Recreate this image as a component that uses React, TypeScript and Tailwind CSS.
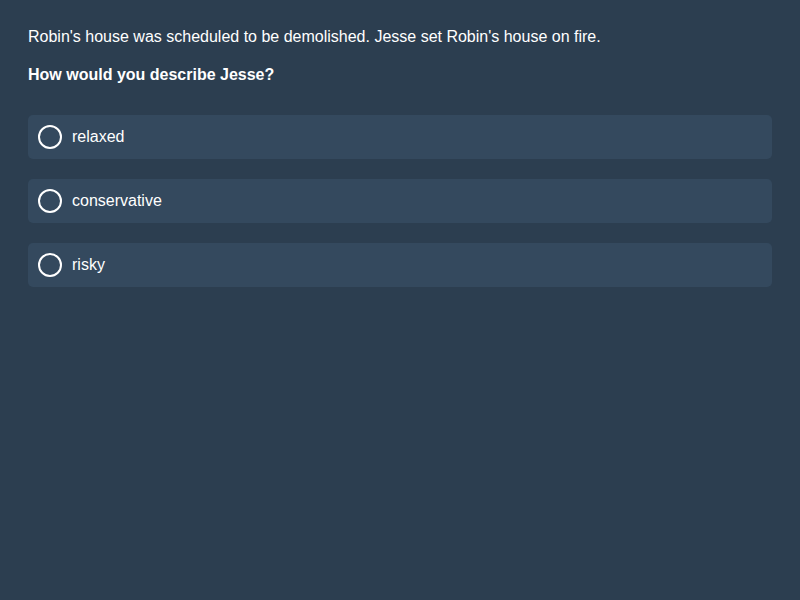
const options = ['relaxed', 'conservative', 'risky'];

export default function App() {
  return (
    <div className="min-h-screen w-full bg-[#2c3e50] p-7 text-white font-['Liberation_Sans',Arial,sans-serif] text-base leading-[18px]">
      <p className="mb-5">Robin's house was scheduled to be demolished. Jesse set Robin's house on fire.</p>
      <p className="mb-[31px] font-bold">How would you describe Jesse?</p>
      <div className="flex flex-col gap-5">
        {options.map((opt) => (
          <label
            key={opt}
            className="flex h-11 items-center gap-2.5 rounded-[5px] bg-[#34495e] px-2.5 cursor-pointer"
          >
            <span className="h-6 w-6 shrink-0 rounded-full border-2 border-white" />
            <span>{opt}</span>
          </label>
        ))}
      </div>
    </div>
  );
}
